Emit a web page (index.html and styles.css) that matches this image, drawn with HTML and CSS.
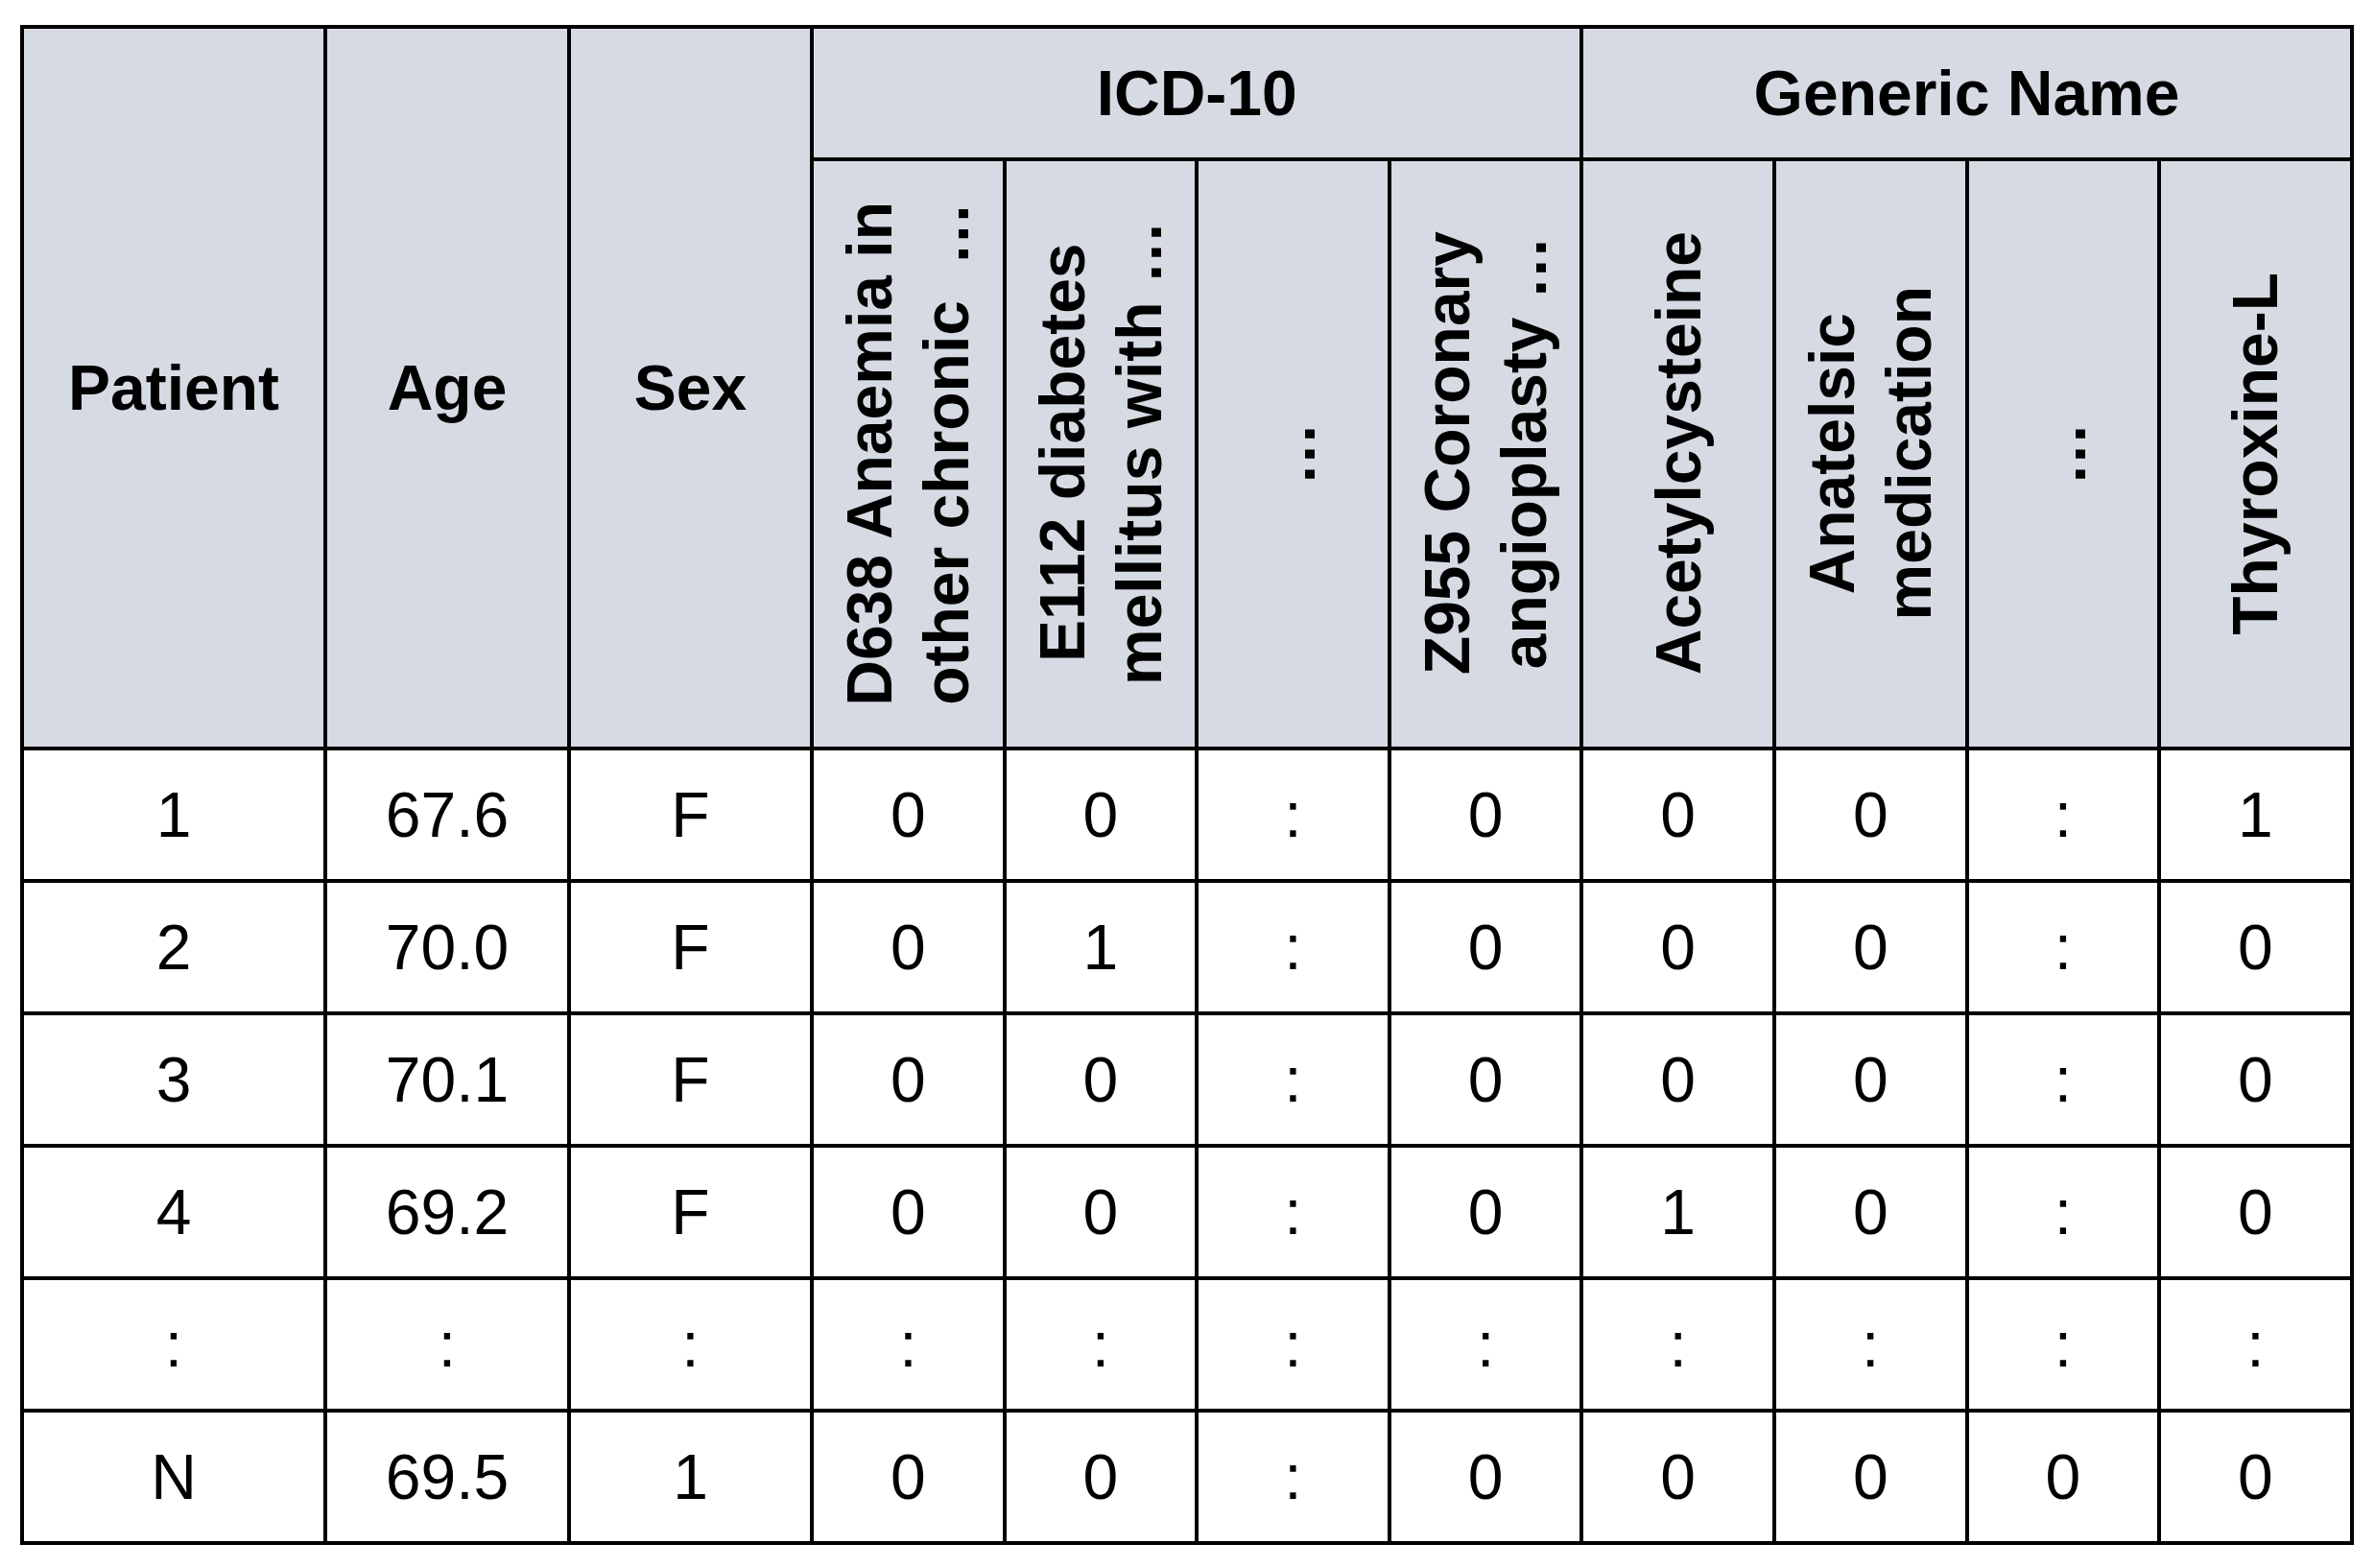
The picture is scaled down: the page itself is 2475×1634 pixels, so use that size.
FILE: index.html
```html
<!DOCTYPE html>
<html lang="en">
<head>
<meta charset="utf-8">
<title>Patient feature matrix</title>
<link rel="stylesheet" href="styles.css">
</head>
<body>
<div class="page">
  <div class="matrix" role="table">
    <div class="cell head tall">Patient</div>
    <div class="cell head tall">Age</div>
    <div class="cell head tall">Sex</div>
    <div class="cell head group">ICD-10</div>
    <div class="cell head group">Generic Name</div>

    <div class="cell head"><span class="vert">D638 Anaemia in<br>other chronic&nbsp; …</span></div>
    <div class="cell head"><span class="vert">E112 diabetes<br>mellitus with …</span></div>
    <div class="cell head"><span class="vert">…</span></div>
    <div class="cell head"><span class="vert">Z955 Coronary<br>angioplasty …</span></div>
    <div class="cell head"><span class="vert">Acetylcysteine</span></div>
    <div class="cell head"><span class="vert">Anatelsic<br>medication</span></div>
    <div class="cell head"><span class="vert">…</span></div>
    <div class="cell head"><span class="vert">Thyroxine-L</span></div>

    <div class="cell">1</div><div class="cell">67.6</div><div class="cell">F</div>
    <div class="cell">0</div><div class="cell">0</div><div class="cell">:</div><div class="cell">0</div>
    <div class="cell">0</div><div class="cell">0</div><div class="cell">:</div><div class="cell">1</div>

    <div class="cell">2</div><div class="cell">70.0</div><div class="cell">F</div>
    <div class="cell">0</div><div class="cell">1</div><div class="cell">:</div><div class="cell">0</div>
    <div class="cell">0</div><div class="cell">0</div><div class="cell">:</div><div class="cell">0</div>

    <div class="cell">3</div><div class="cell">70.1</div><div class="cell">F</div>
    <div class="cell">0</div><div class="cell">0</div><div class="cell">:</div><div class="cell">0</div>
    <div class="cell">0</div><div class="cell">0</div><div class="cell">:</div><div class="cell">0</div>

    <div class="cell">4</div><div class="cell">69.2</div><div class="cell">F</div>
    <div class="cell">0</div><div class="cell">0</div><div class="cell">:</div><div class="cell">0</div>
    <div class="cell">1</div><div class="cell">0</div><div class="cell">:</div><div class="cell">0</div>

    <div class="cell">:</div><div class="cell">:</div><div class="cell">:</div>
    <div class="cell">:</div><div class="cell">:</div><div class="cell">:</div><div class="cell">:</div>
    <div class="cell">:</div><div class="cell">:</div><div class="cell">:</div><div class="cell">:</div>

    <div class="cell">N</div><div class="cell">69.5</div><div class="cell">1</div>
    <div class="cell">0</div><div class="cell">0</div><div class="cell">:</div><div class="cell">0</div>
    <div class="cell">0</div><div class="cell">0</div><div class="cell">0</div><div class="cell">0</div>
  </div>
</div>
</body>
</html>
```

FILE: styles.css
```css
html, body {
  margin: 0;
  background: #ffffff;
}

body {
  font-family: "Liberation Sans", Arial, sans-serif;
  color: #000000;
}

.page {
  padding: 26px 0 0 21px;
}

.matrix {
  display: inline-grid;
  grid-template-columns: 312px 250px 249px repeat(8, 196.6px);
  grid-template-rows: 133.5px 610px repeat(6, 134px);
  gap: 4px;
  padding: 4px;
  background: #000000;
}

.cell {
  background: #ffffff;
  display: flex;
  align-items: center;
  justify-content: center;
  font-size: 66px;
  line-height: 1;
}

.head {
  background: #d6dbe3;
  font-weight: bold;
}

.tall {
  grid-row: span 2;
}

.group {
  grid-column: span 4;
}

.vert {
  writing-mode: vertical-rl;
  transform: rotate(180deg);
  line-height: 80px;
  text-align: center;
  white-space: nowrap;
}
```
